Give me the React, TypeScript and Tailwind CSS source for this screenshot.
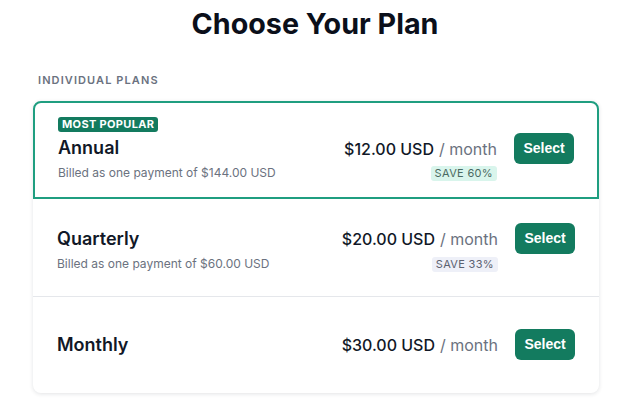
const plans = [
  {
    name: 'Annual',
    price: '$12.00 USD',
    billed: 'Billed as one payment of $144.00 USD',
    save: 'SAVE 60%',
    popular: true,
  },
  {
    name: 'Quarterly',
    price: '$20.00 USD',
    billed: 'Billed as one payment of $60.00 USD',
    save: 'SAVE 33%',
    popular: false,
  },
  {
    name: 'Monthly',
    price: '$30.00 USD',
    billed: null,
    save: null,
    popular: false,
  },
];

function SelectButton() {
  return (
    <button
      type="button"
      className="flex h-[31px] w-[60px] shrink-0 items-center justify-center rounded-md bg-[#137b5f] text-[14px] font-bold text-white"
      style={{ fontFamily: '"Liberation Sans", Arial, sans-serif' }}
    >
      Select
    </button>
  );
}

function Price({ price }: { price: string }) {
  return (
    <div className="flex h-[31px] items-center text-[16px] leading-none">
      <span className="font-medium text-[#111827]">{price}</span>
      <span className="ml-[5px] text-[#6b7280]">/ month</span>
    </div>
  );
}

export default function App() {
  const [annual, quarterly, monthly] = plans;

  return (
    <div
      className="min-h-[406px] bg-white text-[#111827]"
      style={{ fontFamily: 'Inter, "Noto Sans", sans-serif' }}
    >
      <h1 className="pl-[6px] pt-[5px] text-center text-[28.7px] font-bold leading-[38px] text-[#0b0f1a]">
        Choose Your Plan
      </h1>

      <div className="ml-[33px] w-[566px]">
        <div className="mt-[29px] pl-[5px] text-[11px] font-semibold leading-[16px] tracking-[0.1em] text-[#6b7280]">
          INDIVIDUAL PLANS
        </div>

        <div className="mt-[13px] rounded-lg bg-white shadow-[0_1px_4px_rgba(15,23,42,0.12)]">
          {/* Annual, highlighted */}
          <div className="box-border flex h-[98px] items-start justify-between rounded-t-lg border-2 border-[#1f9e80] pl-[23px] pr-[23px] pt-[14px]">
            <div className="flex flex-col items-start">
              <span className="rounded-[3px] bg-[#137b5f] px-[4px] text-[11px] font-bold leading-[15px] tracking-[0.03em] text-white">
                MOST POPULAR
              </span>
              <span className="mt-[4px] text-[18px] font-semibold leading-[24px]">{annual.name}</span>
              <span className="mt-[5px] text-[12px] leading-[16px] text-[#6b7280]">{annual.billed}</span>
            </div>
            <div className="mt-[16px] flex items-start gap-[17px]">
              <div className="flex flex-col items-end">
                <Price price={annual.price} />
                <span className="mt-[2px] rounded-[3px] bg-[#d9f5ec] px-[4px] text-[11px] leading-[15px] tracking-[0.03em] text-[#4a6a62]">
                  {annual.save}
                </span>
              </div>
              <SelectButton />
            </div>
          </div>

          {/* Quarterly */}
          <div className="box-border flex h-[98px] items-start justify-between border-b border-[#e5e7eb] pl-[24px] pr-[24px] pt-[24px]">
            <div className="mt-[4px] flex flex-col items-start">
              <span className="text-[18px] font-semibold leading-[24px]">{quarterly.name}</span>
              <span className="mt-[5px] text-[12px] leading-[16px] text-[#6b7280]">{quarterly.billed}</span>
            </div>
            <div className="flex items-start gap-[17px]">
              <div className="flex flex-col items-end">
                <Price price={quarterly.price} />
                <span className="mt-[3px] rounded-[3px] bg-[#eef0f8] px-[4px] text-[11px] leading-[15px] tracking-[0.03em] text-[#5b6170]">
                  {quarterly.save}
                </span>
              </div>
              <SelectButton />
            </div>
          </div>

          {/* Monthly */}
          <div className="flex h-[96px] items-center justify-between pl-[24px] pr-[24px] pb-[1px]">
            <span className="text-[18px] font-semibold leading-[24px]">{monthly.name}</span>
            <div className="flex items-center gap-[17px]">
              <Price price={monthly.price} />
              <SelectButton />
            </div>
          </div>
        </div>
      </div>
    </div>
  );
}
